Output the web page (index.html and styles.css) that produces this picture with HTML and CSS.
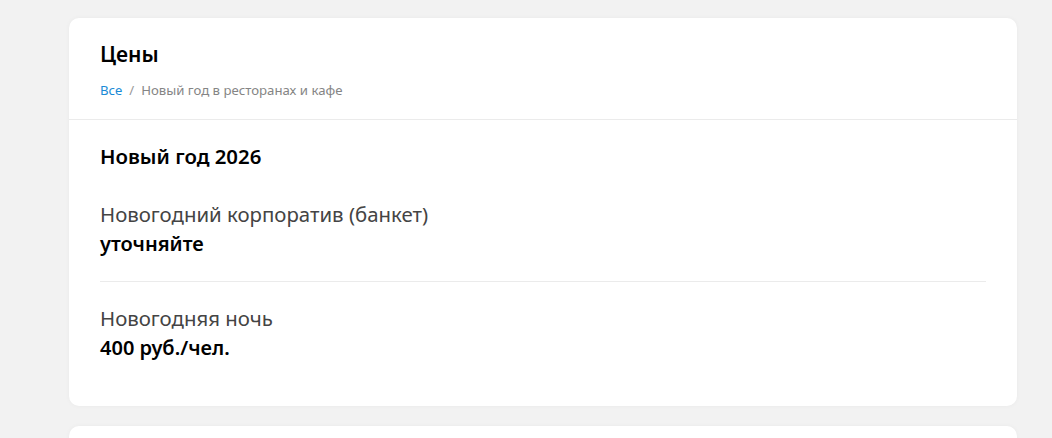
FILE: index.html
```html
<!DOCTYPE html>
<html lang="ru">
<head>
<meta charset="utf-8">
<title>Цены</title>
<link rel="stylesheet" href="styles.css">
</head>
<body>
<div class="page">
  <div class="card card-stub"></div>
  <section class="card">
    <header class="card-head">
      <h1 class="card-title">Цены</h1>
      <nav class="crumbs">
        <a class="crumb-link" href="#">Все</a>
        <span class="crumb-sep">/</span>
        <span class="crumb-current">Новый год в ресторанах и кафе</span>
      </nav>
    </header>
    <div class="card-body">
      <h2 class="group-title">Новый год 2026</h2>
      <div class="price-row">
        <div class="price-label">Новогодний корпоратив (банкет)</div>
        <div class="price-value">уточняйте</div>
      </div>
      <div class="price-row">
        <div class="price-label">Новогодняя ночь</div>
        <div class="price-value">400 руб./чел.</div>
      </div>
    </div>
  </section>
  <div class="card card-next"></div>
</div>
</body>
</html>
```
FILE: styles.css
```css
html, body {
  margin: 0;
  padding: 0;
  background: #f2f2f2;
  font-family: "Noto Sans", "Open Sans", "Liberation Sans", sans-serif;
  color: #000;
  overflow: hidden;
}

.page {
  display: flex;
  flex-direction: column;
  gap: 20px;
  width: 948px;
  padding-left: 69px;
}

.card {
  background: #fff;
  border-radius: 10px;
  box-shadow: 0 0 5px rgba(0, 0, 0, 0.04);
}

.card-stub {
  height: 0;
  margin-top: -2px;
}

.card-next {
  height: 200px;
}

.card-head {
  padding: 23px 31px 20px;
  border-bottom: 1px solid #ebebeb;
}

.card-title {
  margin: 0 0 14px;
  font-size: 21px;
  line-height: 26px;
  font-weight: 600;
  color: #000;
}

.crumbs {
  font-size: 13.2px;
  line-height: 18px;
  color: #858585;
  display: flex;
  gap: 7px;
}

.crumb-link {
  color: #1a8bd6;
  text-decoration: none;
}

.crumb-sep {
  color: #999;
}

.card-body {
  padding: 24px 31px 21px;
}

.group-title {
  margin: 0 0 10px;
  font-size: 20.4px;
  line-height: 24px;
  font-weight: 600;
}

.price-row {
  padding: 24px 0 25px;
  border-bottom: 1px solid #ebebeb;
}

.price-row:last-child {
  border-bottom: none;
}

.price-label {
  font-size: 20.4px;
  line-height: 24px;
  color: #444;
  margin-bottom: 6px;
}

.price-value {
  font-size: 20px;
  line-height: 24px;
  font-weight: 600;
  color: #000;
}
```
